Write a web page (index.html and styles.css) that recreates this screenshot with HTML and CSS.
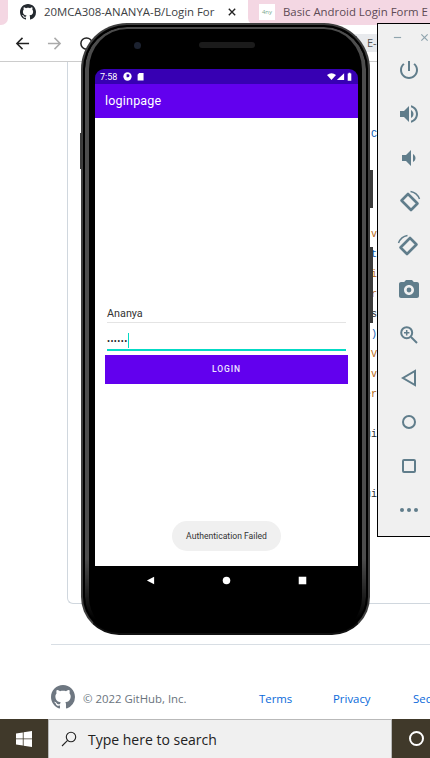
FILE: index.html
```html
<!DOCTYPE html>
<html lang="en">
<head>
  <meta charset="UTF-8">
  <meta name="viewport" content="width=device-width, initial-scale=1.0">
  <title>Login Form</title>
  <link rel="stylesheet" href="styles.css">
</head>
<body>
  <div class="desktop">
    <!-- browser behind the emulator -->
    <div class="tabstrip">
      <div class="tab-gap"></div>
      <div class="tab-active">
        <svg class="tab-logo" viewBox="0 0 16 16"><path d="M8 0C3.58 0 0 3.58 0 8c0 3.54 2.29 6.53 5.47 7.59.4.07.55-.17.55-.38 0-.19-.01-.82-.01-1.49-2.01.37-2.53-.49-2.69-.94-.09-.23-.48-.94-.82-1.13-.28-.15-.68-.52-.01-.53.63-.01 1.08.58 1.23.82.72 1.21 1.87.87 2.33.66.07-.52.28-.87.51-1.07-1.78-.2-3.64-.89-3.64-3.95 0-.87.31-1.59.82-2.15-.08-.2-.36-1.02.08-2.12 0 0 .67-.21 2.2.82.64-.18 1.32-.27 2-.27.68 0 1.36.09 2 .27 1.53-1.04 2.2-.82 2.2-.82.44 1.1.16 1.92.08 2.12.51.56.82 1.27.82 2.15 0 3.07-1.87 3.75-3.65 3.95.29.25.54.73.54 1.48 0 1.07-.01 1.93-.01 2.2 0 .21.15.46.55.38A8.013 8.013 0 0016 8c0-4.42-3.58-8-8-8z"/></svg>
        <span class="tab-title">20MCA308-ANANYA-B/Login For</span>
        <svg class="tab-close" viewBox="0 0 10 10"><path d="M1 1l8 8M9 1l-8 8"/></svg>
      </div>
      <div class="tab-other">
        <span class="tab-favicon">4ny</span>
        <span class="tab-title-other">Basic Android Login Form E</span>
      </div>
    </div>

    <div class="toolbar">
      <svg class="nav-arrow" viewBox="0 0 16 16"><path d="M15 8H2M8 2L2 8l6 6"/></svg>
      <svg class="nav-arrow is-off" viewBox="0 0 16 16"><path d="M1 8h13M8 2l6 6-6 6"/></svg>
      <svg class="nav-reload" viewBox="0 0 16 16"><circle cx="8" cy="8" r="6"/></svg>
      <div class="address">E-</div>
    </div>

    <div class="page">
      <div class="file-card">
        <div class="code">
          <div class="code-line c-blue">C</div>
          <div class="code-line"></div>
          <div class="code-line"></div>
          <div class="code-line"></div>
          <div class="code-line"></div>
          <div class="code-line c-orange">v</div>
          <div class="code-line c-blue">t</div>
          <div class="code-line c-orange">i</div>
          <div class="code-line c-orange">r</div>
          <div class="code-line">s</div>
          <div class="code-line c-blue">)</div>
          <div class="code-line c-orange">V</div>
          <div class="code-line c-orange">v</div>
          <div class="code-line c-orange">er</div>
          <div class="code-line"></div>
          <div class="code-line">ui</div>
          <div class="code-line"></div>
          <div class="code-line"></div>
          <div class="code-line">ui</div>
        </div>
      </div>
      <div class="footer">
        <svg class="footer-logo" viewBox="0 0 16 16"><path d="M8 0C3.58 0 0 3.58 0 8c0 3.54 2.29 6.53 5.47 7.59.4.07.55-.17.55-.38 0-.19-.01-.82-.01-1.49-2.01.37-2.53-.49-2.69-.94-.09-.23-.48-.94-.82-1.13-.28-.15-.68-.52-.01-.53.63-.01 1.08.58 1.23.82.72 1.21 1.87.87 2.33.66.07-.52.28-.87.51-1.07-1.78-.2-3.64-.89-3.64-3.95 0-.87.31-1.59.82-2.15-.08-.2-.36-1.02.08-2.12 0 0 .67-.21 2.2.82.64-.18 1.32-.27 2-.27.68 0 1.36.09 2 .27 1.53-1.04 2.2-.82 2.2-.82.44 1.1.16 1.92.08 2.12.51.56.82 1.27.82 2.15 0 3.07-1.87 3.75-3.65 3.95.29.25.54.73.54 1.48 0 1.07-.01 1.93-.01 2.2 0 .21.15.46.55.38A8.013 8.013 0 0016 8c0-4.42-3.58-8-8-8z"/></svg>
        <span class="copyright">© 2022 GitHub, Inc.</span>
        <a class="footer-link link-terms">Terms</a>
        <a class="footer-link link-privacy">Privacy</a>
        <a class="footer-link link-sec">Sec</a>
      </div>
    </div>

    <div class="taskbar">
      <div class="start">
        <svg class="start-logo" viewBox="0 0 16 16"><path d="M0 2.4l6.8-1v6.1H0zM7.6 1.3L16 0v7.5H7.6zM0 8.3h6.8v6.2l-6.8-1zM7.6 8.3H16V16l-8.4-1.2z"/></svg>
      </div>
      <div class="search">
        <svg class="search-icon" viewBox="0 0 16 16"><circle cx="10" cy="6" r="4.7"/><path d="M6.6 9.4L1 15"/></svg>
        <span>Type here to search</span>
      </div>
      <div class="cortana"><span class="cortana-ring"></span></div>
    </div>

    <!-- emulator phone -->
    <div class="phone">
      <div class="side-btn btn-left"></div>
      <div class="side-btn btn-power"></div>
      <div class="side-btn btn-volume"></div>
      <div class="phone-top">
        <span class="camera"></span>
        <span class="speaker"></span>
      </div>
      <div class="screen">
        <div class="status-bar">
          <span class="clock">7:58</span>
          <svg class="status-icon" viewBox="0 0 10 10"><circle cx="5" cy="5" r="4.6" fill="#fff"/><path d="M4 2.6h1.6a1.6 1.6 0 010 3.2H4zM4 5.8v2" fill="#3700b3"/></svg>
          <svg class="status-icon sd-icon" viewBox="0 0 10 10"><path d="M3.4 1H8.4V9.4H1.8V3z" fill="#fff"/></svg>
          <span class="status-fill"></span>
          <svg class="status-icon" viewBox="0 0 10 10"><path d="M0 3.2Q5 -.4 10 3.2L5 9z" fill="#fff"/></svg>
          <svg class="status-icon" viewBox="0 0 10 10"><path d="M9 1.4V9H1z" fill="#fff"/></svg>
          <svg class="status-icon" viewBox="0 0 10 10"><path d="M3 1.6h1V.8h2v.8h1V9.6H3z" fill="#fff"/></svg>
        </div>
        <div class="app-bar">loginpage</div>
        <div class="content">
          <div class="field">Ananya</div>
          <div class="field is-focused">••••••<span class="caret"></span></div>
          <div class="login-btn">LOGIN</div>
          <div class="toast">Authentication Failed</div>
        </div>
        <div class="nav-bar">
          <svg class="nav-key" viewBox="0 0 10 10"><path d="M9 .8v8.4L1 5z"/></svg>
          <svg class="nav-key" viewBox="0 0 10 10"><circle cx="5" cy="5" r="4.2"/></svg>
          <svg class="nav-key" viewBox="0 0 10 10"><path d="M.8.8h8.4v8.4H.8z"/></svg>
        </div>
      </div>
    </div>

    <!-- emulator side toolbar -->
    <div class="emu-bar">
      <div class="emu-head">
        <svg class="emu-win" viewBox="0 0 10 10"><path d="M1 5h8"/></svg>
        <svg class="emu-win" viewBox="0 0 10 10"><path d="M1.5 1.5l7 7M8.5 1.5l-7 7"/></svg>
      </div>
      <svg class="emu-icon" viewBox="0 0 24 24"><path d="M13 3h-2v10h2V3zm4.83 2.17l-1.42 1.42C17.99 7.86 19 9.81 19 12c0 3.87-3.13 7-7 7s-7-3.13-7-7c0-2.19 1.01-4.14 2.58-5.42L6.17 5.17C4.23 6.82 3 9.26 3 12c0 4.97 4.03 9 9 9s9-4.03 9-9c0-2.74-1.23-5.18-3.17-6.83z"/></svg>
      <svg class="emu-icon" viewBox="0 0 24 24"><path d="M3 9v6h4l5 5V4L7 9H3zm13.5 3c0-1.77-1.02-3.29-2.5-4.03v8.05c1.48-.73 2.5-2.25 2.5-4.02zM14 3.23v2.06c2.89.86 5 3.54 5 6.71s-2.11 5.85-5 6.71v2.06c4.01-.91 7-4.49 7-8.77s-2.99-7.86-7-8.77z"/></svg>
      <svg class="emu-icon" viewBox="0 0 24 24"><path d="M18.5 12c0-1.77-1.02-3.29-2.5-4.03v8.05c1.48-.73 2.5-2.25 2.5-4.02zM5 9v6h4l5 5V4L9 9H5z"/></svg>
      <svg class="emu-icon" viewBox="0 0 24 24"><path class="stroke heavy" d="M4.500 10.500L11 4l9.500 9.500L14 20z"/><path class="stroke thin" d="M13.500 1.500Q20 2.500 22.500 9"/></svg>
      <svg class="emu-icon" viewBox="0 0 24 24"><path class="stroke heavy" d="M19.500 10.500L13 4l-9.500 9.500L10 20z"/><path class="stroke thin" d="M10.500 1.500Q4 2.500 1.500 9"/></svg>
      <svg class="emu-icon" viewBox="0 0 24 24"><path d="M9 2L7.170 4H4c-1.100 0-2 .9-2 2v12c0 1.100.9 2 2 2h16c1.100 0 2-.9 2-2V6c0-1.100-.9-2-2-2h-3.170L15 2H9zm3 15c-2.760 0-5-2.240-5-5s2.240-5 5-5 5 2.240 5 5-2.240 5-5 5zm0-2.600a2.400 2.400 0 100-4.800 2.400 2.400 0 000 4.800z" fill-rule="evenodd"/></svg>
      <svg class="emu-icon" viewBox="0 0 24 24"><circle class="stroke" cx="9.700" cy="10.700" r="5.500"/><path class="stroke" d="M14 15l6 6"/><path class="stroke thin" d="M9.700 8v5.400M7 10.700h5.400"/></svg>
      <svg class="emu-icon" viewBox="0 0 24 24"><path class="stroke" d="M18 5v14L6 12z"/></svg>
      <svg class="emu-icon" viewBox="0 0 24 24"><circle class="stroke" cx="12" cy="12" r="6"/></svg>
      <svg class="emu-icon" viewBox="0 0 24 24"><rect class="stroke" x="6" y="6" width="12" height="12" rx="1"/></svg>
      <svg class="emu-icon" viewBox="0 0 24 24"><circle cx="5" cy="12" r="2"/><circle cx="12" cy="12" r="2"/><circle cx="19" cy="12" r="2"/></svg>
    </div>
  </div>
</body>
</html>
```

FILE: styles.css
```css
html, body { margin: 0; padding: 0; }
body { background: #fff; font-family: "Open Sans", "Liberation Sans", sans-serif; overflow: hidden; }
svg { display: block; }

.desktop { position: relative; width: 430px; height: 758px; display: flex; flex-direction: column; overflow: hidden; background: #fff; }

/* tabs */
.tabstrip { display: flex; height: 25px; flex-shrink: 0; background: #fff; }
.tab-gap { width: 8px; background: #f4d7e3; border-bottom-right-radius: 7px; }
.tab-active { width: 240px; display: flex; align-items: center; padding: 0 0 2px 12px; box-sizing: border-box; }
.tab-logo { width: 16px; height: 16px; fill: #24292f; flex-shrink: 0; }
.tab-title { width: 174px; margin-left: 8px; font-size: 11.400px; color: #3c4043; white-space: nowrap; }
.tab-close { width: 8px; height: 8px; margin-left: 10px; fill: none; stroke: #222; stroke-width: 1.7; }
.tab-other { flex: 1; display: flex; align-items: center; padding: 0 0 2px 11px; background: #f4d7e3; border-bottom-left-radius: 7px; }
.tab-favicon { width: 16px; height: 16px; background: #fff; font-size: 6px; line-height: 16px; text-align: center; color: #7aa88e; flex-shrink: 0; }
.tab-title-other { margin-left: 8px; font-size: 11.400px; color: #5d4a55; white-space: nowrap; }

/* toolbar */
.toolbar { display: flex; align-items: center; height: 37px; flex-shrink: 0; padding: 0 0 0 15px; border-bottom: 1px solid #ccc; box-sizing: border-box; }
.nav-arrow { width: 15px; height: 15px; margin-right: 17px; fill: none; stroke: #222; stroke-width: 1.6; }
.nav-arrow.is-off { stroke: #aaa; }
.nav-reload { width: 15px; height: 15px; fill: none; stroke: #222; stroke-width: 1.6; }
.address { margin-left: 248px; width: 60px; height: 18px; padding-left: 25px; background: #e8eaed; font-size: 11px; line-height: 18px; color: #555; }

/* page */
.page { flex: 1; min-height: 0; display: flex; flex-direction: column; }
.file-card { margin-left: 67px; height: 542px; box-sizing: border-box; border-left: 1px solid #d0d7de; border-bottom: 1px solid #d0d7de; border-bottom-left-radius: 6px; flex-shrink: 0; }
.code { width: 309px; padding-top: 63px; font-family: "Liberation Mono", monospace; font-size: 10px; line-height: 20px; color: #24292f; text-align: right; }
.code-line { height: 20px; }
.c-blue { color: #0a5bb0; }
.c-orange { color: #b3640f; }
.footer { margin: 40px 0 0 51px; padding-top: 40px; border-top: 1px solid #d8dee4; display: flex; align-items: center; height: 24px; font-size: 11.400px; }
.footer-logo { width: 24px; height: 24px; fill: #6e7781; flex-shrink: 0; }
.copyright { margin-left: 8px; width: 176px; padding-top: 3px; color: #6a737d; white-space: nowrap; flex-shrink: 0; }
.footer-link { padding-top: 3px; color: #0969da; white-space: nowrap; flex-shrink: 0; }
.link-terms { width: 74px; }
.link-privacy { width: 80px; }

/* taskbar */
.taskbar { display: flex; height: 39px; flex-shrink: 0; background: #40392a; }
.start { width: 48px; display: flex; align-items: center; justify-content: center; }
.start-logo { width: 16px; height: 16px; fill: #fff; }
.search { width: 344px; box-sizing: border-box; display: flex; align-items: center; padding-left: 12px; background: #f0f0f0; border-top: 1px solid #b9b9b9; border-left: 1px solid #b9b9b9; border-right: 1px solid #b9b9b9; font-size: 14px; color: #222; }
.search-icon { width: 16px; height: 16px; margin-right: 11px; fill: none; stroke: #222; stroke-width: 1.100; }
.cortana { flex: 1; display: flex; align-items: center; justify-content: center; }
.cortana-ring { width: 11px; height: 11px; margin-left: 10px; border: 2px solid #fff; border-radius: 50%; }

/* phone */
.phone { position: absolute; left: 81px; top: 23px; width: 289px; height: 612px; box-sizing: border-box; padding: 0 10px 0 12px; background: #000; border: 2px solid #3e3e3e; border-bottom-color: #111; border-radius: 46px 46px 38px 38px; }
.phone::before { content: ""; position: absolute; top: 2px; left: 2px; right: 2px; bottom: 2px; border: solid #4d4d4d; border-width: 2px 4px 0; border-radius: 42px 42px 34px 34px; -webkit-mask-image: linear-gradient(#000 88%, transparent 98%); mask-image: linear-gradient(#000 88%, transparent 98%); }
.phone-top { position: relative; height: 44px; display: flex; align-items: center; padding: 0 0 4px 39px; box-sizing: border-box; }
.camera { width: 7px; height: 7px; border-radius: 50%; background: #1c2230; }
.speaker { width: 56px; height: 6px; margin-left: 58px; border-radius: 3px; background: #1b1b1b; }
.side-btn { position: absolute; background: #3a3a3a; }
.btn-left { left: -3px; top: 108px; width: 2px; height: 36px; }
.btn-power { right: -5px; top: 145px; width: 3px; height: 38px; }
.btn-volume { right: -5px; top: 222px; width: 3px; height: 76px; }

/* android screen */
.screen { position: relative; display: flex; flex-direction: column; height: 525px; font-family: Roboto, sans-serif; }
.status-bar { display: flex; align-items: center; height: 15px; padding: 0 4px 0 5px; background: #3700b3; border-radius: 9px 9px 0 0; }
.clock { margin-right: 6px; font-size: 9px; color: #fff; }
.status-icon { width: 9px; height: 9px; }
.sd-icon { margin-left: 4px; }
.status-fill { flex: 1; }
.app-bar { height: 34px; padding-left: 10px; background: #6200ee; font-size: 12.500px; line-height: 34px; letter-spacing: .2px; color: #fff; }
.content { position: relative; flex: 1; padding: 178px 10px 0; background: #fff; }
.field { box-sizing: border-box; height: 27px; margin: 0 2px; padding: 11px 0 0; border-bottom: 1px solid #e4e4e4; font-size: 10.800px; color: #333; }
.field.is-focused { height: 28px; padding-top: 10px; border-bottom: 2px solid #03dac5; font-size: 9px; letter-spacing: .4px; color: #222; }
.caret { display: inline-block; width: 1px; height: 15px; margin-left: 0; background: #03dac5; vertical-align: -4px; }
.login-btn { height: 29px; margin-top: 4px; background: #6200ee; font-size: 8.500px; font-weight: 500; line-height: 29px; letter-spacing: .9px; text-align: center; color: #efe6ff; }
.toast { position: absolute; left: 77px; bottom: 15px; width: 109px; height: 30px; border-radius: 15px; background: #f0f0f0; font-size: 8.600px; line-height: 31px; text-align: center; color: #333; }
.nav-bar { height: 28px; display: flex; align-items: center; justify-content: center; gap: 67px; }
.nav-key { width: 9px; height: 9px; fill: #fff; }

/* emulator toolbar */
.emu-bar { position: absolute; left: 377px; top: 23px; width: 60px; height: 514px; box-sizing: border-box; display: flex; flex-direction: column; align-items: flex-start; padding: 0 0 0 18.500px; background: #f0f0f0; border: 1px solid #000; border-width: 1px 0 1px 1.500px; }
.emu-head { display: flex; align-items: center; gap: 18px; height: 24px; margin: 1px 0 0 -4px; flex-shrink: 0; }
.emu-win { width: 9px; height: 9px; fill: none; stroke: #8fa4ae; stroke-width: 1.300; }
.emu-icon { width: 24px; height: 24px; margin-bottom: 20px; fill: #607d8b; flex-shrink: 0; }
.emu-head + .emu-icon { margin-top: 9px; }
.stroke { fill: none; stroke: #607d8b; stroke-width: 2; }
.stroke.heavy { stroke-width: 2.600; stroke-linejoin: round; }
.stroke.thin { stroke-width: 1.500; }
```
